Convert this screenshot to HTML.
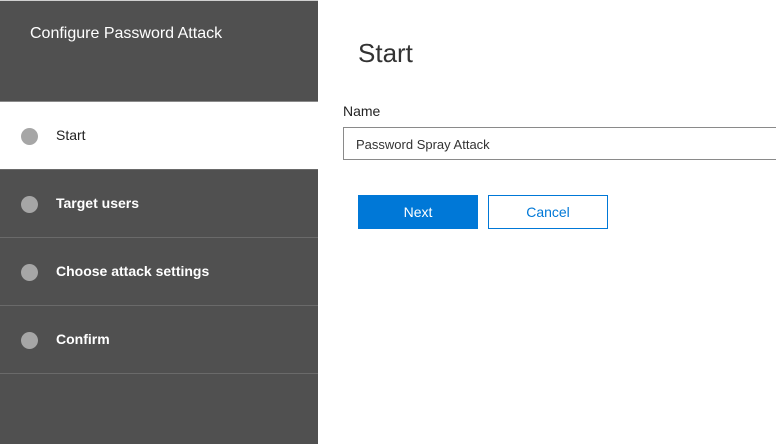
<!DOCTYPE html>
<html><head><style>
*{margin:0;padding:0;box-sizing:border-box}
body{width:776px;height:444px;overflow:hidden;background:#fff;font-family:"Liberation Sans",sans-serif;position:relative}
.side{position:absolute;left:0;top:0;width:318px;height:444px;background:#505050;border-top:1px solid #d0d0d0}
.title{position:absolute;left:30px;top:24px;color:#fff;font-size:16px}
.row{position:absolute;left:0;width:318px;height:68px;border-top:1px solid #6a6a6a}
.row .dot{position:absolute;left:21px;top:26px;width:17px;height:17px;border-radius:50%;background:#a6a6a6}
.row span{position:absolute;left:56px;top:25px;font-size:14px;font-weight:bold;color:#fff}
.row.active{background:#fff;border-top:1px solid #8a8a8a}
.row.active span{color:#222;font-weight:normal}
h1{position:absolute;left:358px;top:38px;font-size:26px;font-weight:normal;color:#333}
.lbl{position:absolute;left:343px;top:103px;font-size:14px;color:#222}
.inp{position:absolute;left:343px;top:127px;width:440px;height:33px;border:1px solid #8a8a8a;font-size:13px;color:#333;padding:9px 12px}
.btn{position:absolute;top:195px;width:120px;height:34px;font-size:14px;text-align:center;line-height:34px}
</style></head><body>
<div class="side">
<div class="title">Configure Password Attack</div>
<div class="row active" style="top:100px"><div class="dot"></div><span>Start</span></div>
<div class="row" style="top:168px"><div class="dot"></div><span>Target users</span></div>
<div class="row" style="top:236px"><div class="dot"></div><span>Choose attack settings</span></div>
<div class="row" style="top:304px"><div class="dot"></div><span>Confirm</span></div>
<div class="row" style="top:372px"></div>
</div>
<h1>Start</h1>
<div class="lbl">Name</div>
<div class="inp">Password Spray Attack</div>
<div class="btn" style="left:358px;background:#0078d7;color:#fff">Next</div>
<div class="btn" style="left:488px;border:1px solid #0078d7;color:#0078d7;line-height:32px">Cancel</div>
</body></html>
